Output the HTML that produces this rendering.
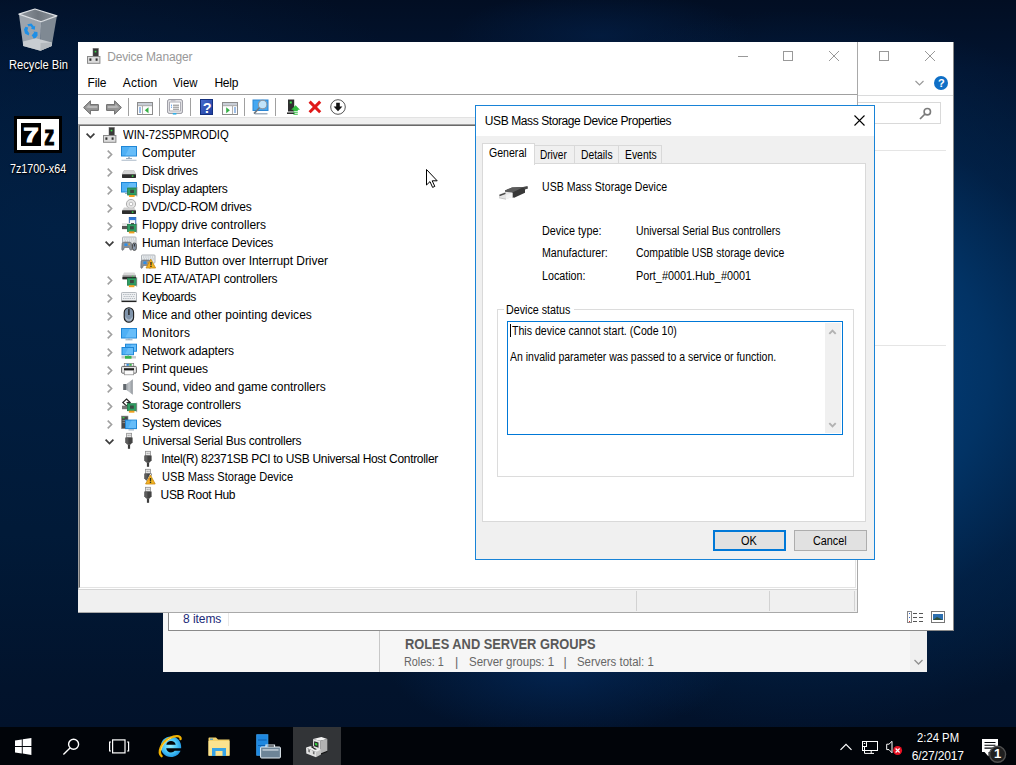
<!DOCTYPE html>
<html lang="en"><head><meta charset="utf-8"><title>Device Manager</title>
<style>
*{box-sizing:border-box;margin:0;padding:0}
html,body{width:1016px;height:765px;overflow:hidden}
body{position:relative;background:#02142e;font-family:"Liberation Sans",sans-serif;font-size:12px;color:#000}
.a{position:absolute}
.t{position:absolute;white-space:nowrap;line-height:16px;height:16px}
svg{position:absolute;overflow:visible}
#bg{left:0;top:0;width:1016px;height:765px;
 background:
  radial-gradient(ellipse 170px 70px at 560px 668px, rgba(3,38,84,.9) 0%, rgba(3,36,80,0) 100%),
  radial-gradient(ellipse 420px 360px at 800px 370px, #04478a 0%, #023365 45%, rgba(2,38,80,.6) 70%, rgba(2,30,66,0) 100%),
  radial-gradient(ellipse 420px 300px at 60px 230px, rgba(1,33,70,.85) 0%, rgba(1,26,57,0) 100%),
  radial-gradient(ellipse 150px 45px at 600px 36px, rgba(3,30,68,.75) 0%, rgba(3,30,68,0) 100%),
  linear-gradient(180deg,#020e23 0%,#021430 9%,#011a39 30%,#011a38 70%,#02132c 90%,#02112a 100%);}
#taskbar{left:0;top:727px;width:1016px;height:38px;background:#010409}
#sm{left:163px;top:100px;width:764px;height:572px;background:#f6f6f6}
#ex{left:168px;top:42px;width:786px;height:589px;background:#fff;border:1px solid #8a8a8a;border-top:none}
#dm{left:78px;top:42px;width:780px;height:571px;background:#fff;border-right:1px solid #a9a9a9;border-bottom:1px solid #a9a9a9}
#dlg{left:475px;top:105px;width:400px;height:455px;background:#f0f0f0;border:1px solid #1883d7}
.d{font-size:12px}
.dl{color:#fff;text-shadow:0 1px 2px rgba(0,0,0,.9),1px 1px 1px rgba(0,0,0,.8)}
.tb{color:#fff}

#dmtitle{left:107.2px;top:49px;letter-spacing:-0.166px}
#m0{left:87.6px;top:75px;letter-spacing:-0.18px}
#m1{left:122.8px;top:75px;letter-spacing:0.216px}
#m2{left:173px;top:75px;transform:scaleX(0.9462);transform-origin:0 0}
#m3{left:214.4px;top:75px;letter-spacing:-0.24px}
#r0{left:123px;top:127px;transform:scaleX(0.9381);transform-origin:0 0}
#r1{left:142px;top:145px;letter-spacing:0.129px}
#r2{left:142px;top:163px;letter-spacing:-0.27px}
#r3{left:142px;top:181px;letter-spacing:-0.24px}
#r4{left:142px;top:199px;letter-spacing:-0.225px}
#r5{left:142px;top:217px}
#r6{left:142px;top:235px;letter-spacing:-0.155px}
#r7{left:160.6px;top:253px;letter-spacing:-0.041px}
#r8{left:142px;top:271px;letter-spacing:-0.15px}
#r9{left:142px;top:289px;letter-spacing:-0.382px}
#r10{left:142px;top:307px;letter-spacing:0.036px}
#r11{left:142px;top:325px;letter-spacing:0.283px}
#r12{left:142px;top:343px;letter-spacing:-0.132px}
#r13{left:142px;top:361px;letter-spacing:-0.115px}
#r14{left:142px;top:379px;letter-spacing:-0.056px}
#r15{left:142px;top:397px;letter-spacing:-0.1px}
#r16{left:142px;top:415px;letter-spacing:-0.346px}
#r17{left:142.6px;top:433px;letter-spacing:-0.25px}
#r18{left:161.2px;top:451px;letter-spacing:-0.315px}
#r19{left:161.6px;top:469px;transform:scaleX(0.9226);transform-origin:0 0}
#r20{left:160.6px;top:487px;letter-spacing:-0.344px}
#dt{left:484.8px;top:113px;letter-spacing:-0.404px}
#tab0{left:489.4px;top:145px;transform:scaleX(0.881);transform-origin:0 0}
#tab1{left:539.6px;top:147px;transform:scaleX(0.838);transform-origin:0 0}
#tab2{left:580.8px;top:147px;transform:scaleX(0.8597);transform-origin:0 0}
#tab3{left:624.8px;top:147px;transform:scaleX(0.8649);transform-origin:0 0}
#d0{left:542px;top:179px;transform:scaleX(0.8803);transform-origin:0 0}
#l0{left:542px;top:223px;transform:scaleX(0.9002);transform-origin:0 0}
#l1{left:542px;top:245px;transform:scaleX(0.8868);transform-origin:0 0}
#l2{left:542px;top:268px;transform:scaleX(0.8918);transform-origin:0 0}
#v0{left:636.2px;top:223px;transform:scaleX(0.8659);transform-origin:0 0}
#v1{left:636.2px;top:245px;transform:scaleX(0.8718);transform-origin:0 0}
#v2{left:636.2px;top:268px;transform:scaleX(0.9024);transform-origin:0 0}
#gs{left:506.2px;top:302px;transform:scaleX(0.8917);transform-origin:0 0}
#s0{left:511.6px;top:323px;transform:scaleX(0.8828);transform-origin:0 0}
#s1{left:509.8px;top:349px;transform:scaleX(0.875);transform-origin:0 0}
#bok{left:741.2px;top:533px;transform:scaleX(0.9082);transform-origin:0 0}
#bca{left:812.8px;top:533px;transform:scaleX(0.9028);transform-origin:0 0}
#k0{left:8.8px;top:57px;transform:scaleX(0.9302);transform-origin:0 0}
#k1{left:9.6px;top:161px;transform:scaleX(0.8953);transform-origin:0 0}
#sm0{left:405px;top:636px;transform:scaleX(0.9175);transform-origin:0 0}
#sma{left:404px;top:654px;transform:scaleX(0.8667);transform-origin:0 0}
#smb{left:455px;top:654px}
#smc{left:468.6px;top:654px;transform:scaleX(0.9211);transform-origin:0 0}
#smd{left:563.6px;top:654px}
#sme{left:577.2px;top:654px;transform:scaleX(0.9133);transform-origin:0 0}
#ex0{left:183px;top:611px;letter-spacing:-0.06px}
#tk0{left:917px;top:730px;transform:scaleX(0.9411);transform-origin:0 0}
#tk1{left:911.8px;top:748px;letter-spacing:-0.158px}
</style></head><body>
<div class="a" id="bg"></div>
<svg style="left:18px;top:8px" width="40" height="44" viewBox="0 0 40 44"><defs><linearGradient id="rbi" x1="0" x2="1"><stop offset="0" stop-color="#9299a1"/><stop offset=".5" stop-color="#70777f"/><stop offset="1" stop-color="#8c939b"/></linearGradient></defs>
<path d="M0.900 6.100L23.100 13.800L22.400 42.700L5.200 37.900Z" fill="#9ca4ad"/>
<path d="M23.100 13.800L38.900 7.900L33.700 37.900L22.400 42.700Z" fill="#7f8993"/>
<path d="M5 33.500L18 30.300L33.900 34.600L33.700 37.900L22.400 42.700L5.200 37.900Z" fill="#c9cdd1"/>
<path d="M22.600 35L33.900 34.600L33.700 37.900L22.400 42.700Z" fill="#b4b9be"/>
<path d="M0.900 6.100L16.900 1L38.900 7.900L23.100 13.800Z" fill="url(#rbi)" stroke="#dde0e4" stroke-width="1.200" stroke-linejoin="round"/>
<g fill="#1e8fe6"><path d="M9.300 16.200L13.400 15.500L16 18.600L17.200 17.800L16.800 21.800L12.800 20.800L14 20L12.400 18L10.600 18.400Z"/><path d="M7.400 18.800L10.200 19.600L9.400 22.400L11.400 25.400L10.600 27.600L7 25.400L6 21.400Z"/><path d="M13.600 27.400L16.200 24.400L15.400 23.600L19.400 24L19.600 27.600L17.600 30L15.600 30.400L14.800 28.800Z"/></g></svg>
<div class="t dl" id="k0">Recycle Bin</div>
<div class="a" style="left:14px;top:116px;width:48px;height:37px;background:#000"></div>
<div class="a" style="left:17px;top:119px;width:42px;height:31px;background:#fff"></div>
<div class="a" style="left:21px;top:123px;width:20px;height:23px;background:#000"></div>
<svg style="left:21px;top:123px" width="36" height="23" viewBox="0 0 36 23" font-family="Liberation Sans, sans-serif" font-weight="bold"><text transform="translate(2.400,19) scale(1.320,1)" font-size="20.500" fill="#fff" stroke="#fff" stroke-width="1.100">7</text><text transform="translate(23.200,22.300) scale(.740,1)" font-size="27.500" fill="#000" stroke="#000" stroke-width="1.100">z</text></svg>
<div class="t dl" id="k1">7z1700-x64</div>
<div class="a" id="sm"></div>
<div class="a" style="left:379px;top:631px;width:1px;height:41px;background:#c8c8c8"></div>
<div class="a" style="left:910px;top:631px;width:17px;height:41px;background:#f0f0f0"></div>
<svg style="left:914px;top:659px" width="9" height="6" viewBox="0 0 9 6"><path d="M0.5 1L4.5 5L8.5 1" stroke="#909090" stroke-width="1.3" fill="none"/></svg>
<div class="t" id="sm0" style="font-size:14px;font-weight:bold;color:#595959">ROLES AND SERVER GROUPS</div>
<div class="t" id="sma" style="font-size:12.5px;color:#666">Roles: 1</div>
<div class="t" id="smb" style="font-size:12.5px;color:#666">|</div>
<div class="t" id="smc" style="font-size:12.5px;color:#666">Server groups: 1</div>
<div class="t" id="smd" style="font-size:12.5px;color:#666">|</div>
<div class="t" id="sme" style="font-size:12.5px;color:#666">Servers total: 1</div>
<div class="a" id="ex"></div>
<svg style="left:879px;top:51px" width="60" height="12" viewBox="0 0 60 12"><g stroke="#999" stroke-width="1" fill="none"><rect x="0.5" y="0.5" width="9" height="9"/><path d="M46 0L56 10M56 0L46 10"/></g></svg>
<svg style="left:915px;top:80px" width="10" height="7" viewBox="0 0 10 7"><path d="M0.5 1L4.5 5L8.5 1" stroke="#9a9a9a" stroke-width="1.2" fill="none"/></svg>
<div class="a" style="left:934px;top:76px;width:14px;height:14px;border-radius:7px;background:#0f6fc6"></div>
<div class="t" style="left:938px;top:75px;color:#fff;font-weight:bold;font-size:11px">?</div>
<div class="a" style="left:858px;top:95px;width:95px;height:1px;background:#dadbdc"></div>
<div class="a" style="left:850px;top:102px;width:91px;height:22px;border:1px solid #d9d9d9;background:#fff"></div>
<svg style="left:919px;top:107px" width="13" height="13" viewBox="0 0 13 13"><circle cx="8.3" cy="4.7" r="3.2" stroke="#7a7a7a" stroke-width="1.6" fill="none"/><path d="M6 7L1 12" stroke="#7a7a7a" stroke-width="1.7"/></svg>
<div class="a" style="left:870px;top:150px;width:76px;height:1px;background:#e5e5e5"></div>
<div class="a" style="left:870px;top:345px;width:76px;height:1px;background:#e5e5e5"></div>
<svg style="left:907px;top:611px" width="38" height="13" viewBox="0 0 38 13"><g fill="none" stroke="#666" stroke-width="1"><rect x="0.5" y="0.5" width="4" height="11" stroke="#888"/><path d="M6 2.5H10M12 2.5H16M6 6.5H10M12 6.5H16M6 10.5H10M12 10.5H16" stroke="#555"/><path d="M2 2.5H3M2 6.5H3" stroke="#36c"/><path d="M2 10.5H3" stroke="#c33"/><rect x="24.500" y="0.500" width="13" height="11" stroke="#777" fill="#fff"/></g><rect x="26" y="3" width="10" height="6" fill="#2c6fb0"/><path d="M26 9L30 6L36 9Z" fill="#2d4f3a"/></svg>
<div class="t" id="ex0" style="color:#1b2a78">8 items</div>
<div class="a" style="left:228px;top:613px;width:1px;height:13px;background:#e8e8e8"></div>
<div class="a" id="dm"></div>
<svg style="left:86px;top:48px" width="16" height="16" viewBox="0 0 16 16"><rect x="7" y="0.400" width="5.400" height="8" fill="#3a3a3a"/><rect x="7" y="0.400" width="5.400" height="8" fill="none" stroke="#6a6a6a" stroke-width=".5"/><rect x="8.700" y="2.800" width="1.600" height="1.600" fill="#3be04a"/><rect x="1.500" y="8.500" width="12.400" height="6.800" fill="#dcdcdc" stroke="#8a8a8a" stroke-width="1"/><rect x="3.400" y="10.400" width="2" height="2.400" fill="#333"/><rect x="9.600" y="10.400" width="2" height="2.400" fill="#333"/></svg>
<div class="t" id="dmtitle" style="color:#999">Device Manager</div>
<svg style="left:738px;top:51px" width="100" height="12" viewBox="0 0 100 12"><g stroke="#999" stroke-width="1" fill="none"><path d="M0 5.5H10"/><rect x="45.5" y="0.5" width="9" height="9"/><path d="M91 0L101 10M101 0L91 10"/></g></svg>
<div class="t m" id="m0">File</div>
<div class="t m" id="m1">Action</div>
<div class="t m" id="m2">View</div>
<div class="t m" id="m3">Help</div>
<div class="a" style="left:78px;top:94px;width:779px;height:1px;background:#a0a0a0"></div>
<svg style="left:83px;top:100px" width="16" height="15" viewBox="0 0 16 15"><path d="M0.600 7.500L7.400 0.800V4.600H15.400V10.400H7.400V14.200Z" fill="#969696" stroke="#6c6c6c" stroke-width="1" stroke-linejoin="round"/><path d="M3 7.500L6.600 4V6H14.300V8H6.600Z" fill="#b8b8b8"/></svg>
<svg style="left:106px;top:100px" width="16" height="15" viewBox="0 0 16 15"><g transform="translate(16,0) scale(-1,1)"><path d="M0.600 7.500L7.400 0.800V4.600H15.400V10.400H7.400V14.200Z" fill="#969696" stroke="#6c6c6c" stroke-width="1" stroke-linejoin="round"/><path d="M3 7.500L6.600 4V6H14.300V8H6.600Z" fill="#b8b8b8"/></g></svg>
<div class="a" style="left:128px;top:98px;width:1px;height:18px;background:#a0a0a0"></div>
<div class="a" style="left:159px;top:98px;width:1px;height:18px;background:#a0a0a0"></div>
<div class="a" style="left:190px;top:98px;width:1px;height:18px;background:#a0a0a0"></div>
<div class="a" style="left:244px;top:98px;width:1px;height:18px;background:#a0a0a0"></div>
<div class="a" style="left:275px;top:98px;width:1px;height:18px;background:#a0a0a0"></div>
<svg style="left:137px;top:102px" width="16" height="13" viewBox="0 0 16 13"><rect x="0.500" y="0.500" width="15" height="12" fill="#fdfdfd" stroke="#8c8c8c" stroke-width="1"/><rect x="1" y="1" width="14" height="2.200" fill="#c9ced6"/><path d="M1 3.700H15" stroke="#8c8c8c" stroke-width=".8"/><path d="M5.5 4V12.500" stroke="#9a9a9a" stroke-width=".8"/><path d="M2 6H4M2 8H4M2 10H4" stroke="#3f7fd0" stroke-width="1"/><path d="M11.500 5.200V11.200L7.800 8.200Z" fill="#35b045"/></svg>
<svg style="left:167px;top:99px" width="16" height="16" viewBox="0 0 16 16"><rect x="0.700" y="0.700" width="14.600" height="13.600" rx="1.200" fill="#f4f4f6" stroke="#8a8a94" stroke-width="1"/><rect x="2.600" y="3" width="10.800" height="9" fill="#fff" stroke="#9a9aa4" stroke-width=".8"/><path d="M6 6.200H12M6 8.200H12M6 10.200H12" stroke="#777" stroke-width=".9"/><path d="M4 6.200H5M4 8.200H5" stroke="#3a8ee6" stroke-width="1"/><rect x="5.800" y="14" width="3.600" height="1.600" fill="#2fb0e8"/><path d="M4 1.800H8.500" stroke="#b4b4bc" stroke-width="1"/></svg>
<svg style="left:200px;top:99px" width="13" height="16" viewBox="0 0 13 16"><defs><linearGradient id="hg" x1="0" x2="1" y1="0" y2="1"><stop offset="0" stop-color="#4a6fd0"/><stop offset="1" stop-color="#1c3a9c"/></linearGradient></defs><rect x="0" y="0" width="13" height="16" fill="url(#hg)"/><rect x="0.500" y="0.500" width="12" height="15" fill="none" stroke="#14307e" stroke-width="1"/><text x="7.200" y="13.700" text-anchor="middle" font-family="Liberation Sans, sans-serif" font-weight="bold" font-size="14.500" fill="#fff">?</text></svg>
<svg style="left:222px;top:102px" width="16" height="13" viewBox="0 0 16 13"><rect x="0.500" y="0.500" width="15" height="12" fill="#fdfdfd" stroke="#8c8c8c" stroke-width="1"/><rect x="1" y="1" width="14" height="2.200" fill="#c9ced6"/><path d="M1 3.700H15" stroke="#8c8c8c" stroke-width=".8"/><path d="M10.5 4V12.500" stroke="#9a9a9a" stroke-width=".8"/><path d="M12 6H14M12 8H14M12 10H14" stroke="#3f7fd0" stroke-width="1"/><path d="M4.200 5.200V11.200L7.900 8.200Z" fill="#35b045"/></svg>
<svg style="left:252px;top:99px" width="18" height="16" viewBox="0 0 18 16"><rect x="1" y="1" width="15" height="10.500" fill="#45a8f2" stroke="#2b86d4" stroke-width="1"/><path d="M3 14.800H15.500" stroke="#8a9cb0" stroke-width="1.200"/><circle cx="10.600" cy="5.600" r="4.300" fill="#d7eefc" fill-opacity=".85" stroke="#8a96a2" stroke-width="1.100"/><path d="M7.400 8.800L2 14.600" stroke="#70787f" stroke-width="1.600"/></svg>
<svg style="left:287px;top:99px" width="14" height="16" viewBox="0 0 14 16"><rect x="1" y="0.500" width="6.200" height="12" fill="#2f2f2f"/><rect x="2.800" y="2.500" width="2" height="2" fill="#39e04a"/><path d="M0 14.200H7.500" stroke="#222" stroke-width="1.500"/><path d="M8.600 6.200L13 10.800H10.800V12H6.400V10.800H4.200Z" fill="#30c040"/><path d="M6.400 13.200H10.800M6.400 15.200H10.800" stroke="#30c040" stroke-width="1.100"/></svg>
<svg style="left:308px;top:100px" width="14" height="14" viewBox="0 0 14 14"><path d="M1.600 1.600L12.200 12.200M12.200 1.600L1.600 12.200" stroke="#e01818" stroke-width="3" stroke-linecap="butt"/></svg>
<svg style="left:330px;top:99px" width="16" height="16" viewBox="0 0 16 16"><circle cx="8" cy="8" r="7.300" fill="#fff" stroke="#555" stroke-width="1"/><path d="M6.200 3.800H9.800V7.600H12.400L8 12.300L3.600 7.600H6.200Z" fill="#111"/></svg>
<div class="a" style="left:78px;top:117px;width:779px;height:7px;background:#f0f0f0;border-top:1px solid #e2e2e2"></div>
<div class="a" style="left:78px;top:124px;width:779px;height:465px;border:1px solid #a0a0a0;border-right-color:#fff;border-bottom-color:#fff"></div>
<div class="a" style="left:79px;top:125px;width:777px;height:463px;border:1px solid #696969;border-right-color:#e3e3e3;border-bottom-color:#e3e3e3"></div>
<svg style="left:86.0px;top:133px" width="9" height="6" viewBox="0 0 9 6"><path d="M0.600 0.600L4.500 4.500L8.400 0.600" stroke="#3c3c3c" stroke-width="1.700" fill="none"/></svg>
<svg style="left:102px;top:127px" width="16" height="16" viewBox="0 0 16 16"><rect x="7" y="0.400" width="5.400" height="8" fill="#3a3a3a"/><rect x="7" y="0.400" width="5.400" height="8" fill="none" stroke="#6a6a6a" stroke-width=".5"/><rect x="8.700" y="2.800" width="1.600" height="1.600" fill="#3be04a"/><rect x="1.500" y="8.500" width="12.400" height="6.800" fill="#dcdcdc" stroke="#8a8a8a" stroke-width="1"/><rect x="3.400" y="10.400" width="2" height="2.400" fill="#333"/><rect x="9.600" y="10.400" width="2" height="2.400" fill="#333"/></svg>
<div class="t r" id="r0">WIN-72S5PMRODIQ</div>
<svg style="left:107.0px;top:150px" width="6" height="9" viewBox="0 0 6 9"><path d="M0.700 0.600L4.600 4.500L0.700 8.400" stroke="#a0a0a0" stroke-width="1.600" fill="none"/></svg>
<svg style="left:121px;top:145px" width="16" height="16" viewBox="0 0 16 16"><rect x="0.5" y="1.5" width="15" height="9.5" fill="#4fb0f5" stroke="#1f86d6" stroke-width="1"/><path d="M8.75 2.0L15.0 2.0V10.5L4.25 10.5Z" fill="#7cc8fb" opacity=".55"/><path d="M8 11.500V13.500" stroke="#9ab" stroke-width="1.500"/><path d="M5 13.600H11" stroke="#8fa3b5" stroke-width="1"/><path d="M0.500 15.300H15.500" stroke="#b9c6d2" stroke-width="1.200"/></svg>
<div class="t r" id="r1">Computer</div>
<svg style="left:107.0px;top:168px" width="6" height="9" viewBox="0 0 6 9"><path d="M0.700 0.600L4.600 4.500L0.700 8.400" stroke="#a0a0a0" stroke-width="1.600" fill="none"/></svg>
<svg style="left:121px;top:163px" width="16" height="16" viewBox="0 0 16 16"><path d="M3 7.500H13L15 11.500H1Z" fill="#d4d4d4"/><path d="M3 7.500H13L15 11.500H1Z" fill="none" stroke="#b5b5b5" stroke-width=".5"/><rect x="1" y="11.300" width="14" height="3.600" rx=".6" fill="#2d2d2d"/><rect x="10.800" y="12.400" width="1.600" height="1.400" fill="#3be04a"/></svg>
<div class="t r" id="r2">Disk drives</div>
<svg style="left:107.0px;top:186px" width="6" height="9" viewBox="0 0 6 9"><path d="M0.700 0.600L4.600 4.500L0.700 8.400" stroke="#a0a0a0" stroke-width="1.600" fill="none"/></svg>
<svg style="left:121px;top:181px" width="16" height="16" viewBox="0 0 16 16"><rect x="0.5" y="1.5" width="15" height="9.5" fill="#4fb0f5" stroke="#1f86d6" stroke-width="1"/><path d="M8.75 2.0L15.0 2.0V10.5L4.25 10.5Z" fill="#7cc8fb" opacity=".55"/><path d="M4 12.400H8" stroke="#8fa3b5" stroke-width="1"/><g transform="translate(6.6,7)"><rect x="0" y="0" width="9" height="7" fill="#2f9e63"/><rect x="0" y="0" width="9" height="7" fill="none" stroke="#1f7a49" stroke-width=".8"/><rect x="2.600" y="1.800" width="3.800" height="3.200" fill="#3b4a42"/><rect x="1.500" y="7" width="5.500" height="2" fill="#f0a020"/><path d="M9.300 -1V8.500" stroke="#8d8d8d" stroke-width=".8"/></g></svg>
<div class="t r" id="r3">Display adapters</div>
<svg style="left:107.0px;top:204px" width="6" height="9" viewBox="0 0 6 9"><path d="M0.700 0.600L4.600 4.500L0.700 8.400" stroke="#a0a0a0" stroke-width="1.600" fill="none"/></svg>
<svg style="left:121px;top:199px" width="16" height="16" viewBox="0 0 16 16"><circle cx="10" cy="5" r="4.600" fill="#e6e6e6" stroke="#9c9c9c" stroke-width=".8"/><circle cx="10" cy="5" r="1.800" fill="#fff" stroke="#a8a8a8" stroke-width=".7"/><path d="M3 8.500H13L15 11.500H1Z" fill="#cfcfcf"/><rect x="1" y="11.300" width="14" height="3.600" rx=".6" fill="#2d2d2d"/><rect x="10.800" y="12.400" width="1.600" height="1.400" fill="#3be04a"/></svg>
<div class="t r" id="r4">DVD/CD-ROM drives</div>
<svg style="left:107.0px;top:222px" width="6" height="9" viewBox="0 0 6 9"><path d="M0.700 0.600L4.600 4.500L0.700 8.400" stroke="#a0a0a0" stroke-width="1.600" fill="none"/></svg>
<svg style="left:121px;top:217px" width="16" height="16" viewBox="0 0 16 16"><rect x="8.300" y="0.500" width="6.500" height="8" fill="#f4f6f8" stroke="#2c5ea8" stroke-width=".9"/><rect x="8.300" y="0.500" width="6.500" height="2.600" fill="#2f78d8"/><rect x="10" y="6" width="3" height="2.500" fill="#555"/><path d="M1 6.500H8.500V12.500H1Z" fill="#cfcfcf"/><rect x="1" y="9" width="7" height="3" fill="#555"/><rect x="1" y="6" width="8" height="3" fill="#e3e3e3"/><g transform="translate(6.4,7.4)"><rect x="0" y="0" width="9" height="7" fill="#2f9e63"/><rect x="0" y="0" width="9" height="7" fill="none" stroke="#1f7a49" stroke-width=".8"/><rect x="2.600" y="1.800" width="3.800" height="3.200" fill="#3b4a42"/><rect x="1.500" y="7" width="5.500" height="2" fill="#f0a020"/><path d="M9.300 -1V8.500" stroke="#8d8d8d" stroke-width=".8"/></g></svg>
<div class="t r" id="r5">Floppy drive controllers</div>
<svg style="left:105.0px;top:241px" width="9" height="6" viewBox="0 0 9 6"><path d="M0.600 0.600L4.500 4.500L8.400 0.600" stroke="#3c3c3c" stroke-width="1.700" fill="none"/></svg>
<svg style="left:121px;top:235px" width="16" height="16" viewBox="0 0 16 16"><rect x="1.500" y="2" width="13.500" height="8" rx=".8" fill="#eceff1" stroke="#9aa0a6" stroke-width=".8"/><path d="M3 4H14M3 8H14" stroke="#b4bac0" stroke-width="1" stroke-dasharray="1.400 .8"/><path d="M2.500 6H14" stroke="#b4bac0" stroke-width="1" stroke-dasharray="1.400 .8" stroke-dashoffset="1.100"/><g transform="translate(0,1.800)"><path d="M1 7.600C1 6 2 5.300 3.300 5.300H8.300C9.600 5.300 10.500 6 10.500 7.600L10.800 12.500C10.800 13.600 9.400 13.800 9 12.800L8.200 10.600H3.400L2.600 12.800C2.200 13.800 .7 13.600 .8 12.500Z" fill="#8d9399" stroke="#555b61" stroke-width=".6"/><rect x="3.400" y="6.600" width="3" height="2.600" fill="#2e8fe8"/><circle cx="8.200" cy="7.500" r=".8" fill="#e8a020"/></g><rect x="11.500" y="8" width="3.800" height="7.400" rx="1.800" fill="#8796a8" stroke="#333" stroke-width=".8"/><path d="M13.400 9V11.500" stroke="#222" stroke-width=".9"/></svg>
<div class="t r" id="r6">Human Interface Devices</div>
<svg style="left:140px;top:253px" width="16" height="16" viewBox="0 0 16 16"><rect x="1.500" y="2" width="13.500" height="8" rx=".8" fill="#eceff1" stroke="#9aa0a6" stroke-width=".8"/><path d="M3 4H14M3 8H14" stroke="#b4bac0" stroke-width="1" stroke-dasharray="1.400 .8"/><path d="M2.500 6H14" stroke="#b4bac0" stroke-width="1" stroke-dasharray="1.400 .8" stroke-dashoffset="1.100"/><g transform="translate(0,1.800)"><path d="M1 7.600C1 6 2 5.300 3.300 5.300H8.300C9.600 5.300 10.500 6 10.500 7.600L10.800 12.500C10.800 13.600 9.400 13.800 9 12.800L8.200 10.600H3.400L2.600 12.800C2.200 13.800 .7 13.600 .8 12.500Z" fill="#8d9399" stroke="#555b61" stroke-width=".6"/><rect x="3.400" y="6.600" width="3" height="2.600" fill="#2e8fe8"/><circle cx="8.200" cy="7.500" r=".8" fill="#e8a020"/></g><path d="M10.800 6.200L15.600 15H6Z" fill="#f4b223" stroke="#c88a12" stroke-width=".8" stroke-linejoin="round"/><text x="10.800" y="14.300" text-anchor="middle" font-family="Liberation Sans, sans-serif" font-weight="bold" font-size="8" fill="#111">!</text></svg>
<div class="t r" id="r7">HID Button over Interrupt Driver</div>
<svg style="left:107.0px;top:276px" width="6" height="9" viewBox="0 0 6 9"><path d="M0.700 0.600L4.600 4.500L0.700 8.400" stroke="#a0a0a0" stroke-width="1.600" fill="none"/></svg>
<svg style="left:121px;top:271px" width="16" height="16" viewBox="0 0 16 16"><path d="M3 1.500H13.500L15 4.500H1.500Z" fill="#d8d8d8"/><rect x="1.500" y="4.300" width="13.500" height="4.400" fill="#8a8a8a"/><rect x="1.500" y="6" width="13.500" height="2" fill="#2a2a2a"/><rect x="11" y="4.800" width="1.200" height="1" fill="#3be04a"/><g transform="translate(6.4,7.2)"><rect x="0" y="0" width="9" height="7" fill="#2f9e63"/><rect x="0" y="0" width="9" height="7" fill="none" stroke="#1f7a49" stroke-width=".8"/><rect x="2.600" y="1.800" width="3.800" height="3.200" fill="#3b4a42"/><rect x="1.500" y="7" width="5.500" height="2" fill="#f0a020"/><path d="M9.300 -1V8.500" stroke="#8d8d8d" stroke-width=".8"/></g></svg>
<div class="t r" id="r8">IDE ATA/ATAPI controllers</div>
<svg style="left:107.0px;top:294px" width="6" height="9" viewBox="0 0 6 9"><path d="M0.700 0.600L4.600 4.500L0.700 8.400" stroke="#a0a0a0" stroke-width="1.600" fill="none"/></svg>
<svg style="left:121px;top:289px" width="16" height="16" viewBox="0 0 16 16"><rect x="0.500" y="3.500" width="15" height="8.500" rx=".8" fill="#eef0f2" stroke="#a4aab0" stroke-width=".8"/><path d="M2 5.500H14M2 9.500H14" stroke="#b7bdc3" stroke-width="1" stroke-dasharray="1.400 .8"/><path d="M2 7.500H14" stroke="#b7bdc3" stroke-width="1" stroke-dasharray="1.400 .8" stroke-dashoffset="1.100"/><path d="M0.500 12.400H15.500" stroke="#222" stroke-width="1.400"/></svg>
<div class="t r" id="r9">Keyboards</div>
<svg style="left:107.0px;top:312px" width="6" height="9" viewBox="0 0 6 9"><path d="M0.700 0.600L4.600 4.500L0.700 8.400" stroke="#a0a0a0" stroke-width="1.600" fill="none"/></svg>
<svg style="left:121px;top:307px" width="16" height="16" viewBox="0 0 16 16"><rect x="3.200" y="0.800" width="9.400" height="14.400" rx="4.700" fill="#8094ab" stroke="#1c1c1c" stroke-width="1.100"/><path d="M4.500 9C6 13.500 10 13.500 11.500 9V11C11 14.800 5 14.800 4.500 11Z" fill="#bcc8d4" opacity=".8"/><path d="M7.900 2V8" stroke="#222" stroke-width="1.400"/></svg>
<div class="t r" id="r10">Mice and other pointing devices</div>
<svg style="left:107.0px;top:330px" width="6" height="9" viewBox="0 0 6 9"><path d="M0.700 0.600L4.600 4.500L0.700 8.400" stroke="#a0a0a0" stroke-width="1.600" fill="none"/></svg>
<svg style="left:121px;top:325px" width="16" height="16" viewBox="0 0 16 16"><rect x="0.5" y="3.5" width="15" height="9.5" fill="#4fb0f5" stroke="#1f86d6" stroke-width="1"/><path d="M8.75 4.0L15.0 4.0V12.5L4.25 12.5Z" fill="#7cc8fb" opacity=".55"/><path d="M8 13.500V14.500" stroke="#9ab" stroke-width="1.500"/><path d="M4.500 14.800H11.500" stroke="#8fa3b5" stroke-width="1"/></svg>
<div class="t r" id="r11">Monitors</div>
<svg style="left:107.0px;top:348px" width="6" height="9" viewBox="0 0 6 9"><path d="M0.700 0.600L4.600 4.500L0.700 8.400" stroke="#a0a0a0" stroke-width="1.600" fill="none"/></svg>
<svg style="left:121px;top:343px" width="16" height="16" viewBox="0 0 16 16"><g transform="translate(0,.7)"><rect x="4.5" y="0.5" width="11" height="7" fill="#4fb0f5" stroke="#1f86d6" stroke-width="1"/><path d="M10.55 1.0L15.0 1.0V7.0L7.25 7.0Z" fill="#7cc8fb" opacity=".55"/><rect x="1" y="3.8" width="11.5" height="7.2" fill="#4fb0f5" stroke="#1f86d6" stroke-width="1"/><path d="M7.325 4.3L12.0 4.3V10.5L3.875 10.5Z" fill="#7cc8fb" opacity=".55"/><path d="M0.500 13.600H15" stroke="#c9c9c9" stroke-width="2.400"/><rect x="4" y="12.200" width="6.500" height="2.800" fill="#36b34a"/><path d="M7.200 11V12.500" stroke="#8aa" stroke-width="1.200"/></g></svg>
<div class="t r" id="r12">Network adapters</div>
<svg style="left:107.0px;top:366px" width="6" height="9" viewBox="0 0 6 9"><path d="M0.700 0.600L4.600 4.500L0.700 8.400" stroke="#a0a0a0" stroke-width="1.600" fill="none"/></svg>
<svg style="left:121px;top:361px" width="16" height="16" viewBox="0 0 16 16"><g transform="translate(0,1.800)"><rect x="3.300" y="0.600" width="9.400" height="4" fill="#f2f2f2" stroke="#777" stroke-width=".7"/><rect x="5.500" y="1" width="2.400" height="2" fill="#2f86e0"/><rect x="8.300" y="1" width="2.400" height="2" fill="#3ab54a"/><rect x="0.600" y="3.600" width="14.800" height="6.800" rx="1" fill="#e6e6e6" stroke="#555" stroke-width=".9"/><rect x="3" y="5.400" width="10" height="2.200" fill="#1e1e1e"/><rect x="3.300" y="7.600" width="9.400" height="4.400" fill="#fbfbfb" stroke="#888" stroke-width=".7"/></g></svg>
<div class="t r" id="r13">Print queues</div>
<svg style="left:107.0px;top:384px" width="6" height="9" viewBox="0 0 6 9"><path d="M0.700 0.600L4.600 4.500L0.700 8.400" stroke="#a0a0a0" stroke-width="1.600" fill="none"/></svg>
<svg style="left:121px;top:379px" width="16" height="16" viewBox="0 0 16 16"><defs><linearGradient id="sg" x1="0" x2="1"><stop offset="0" stop-color="#70767c"/><stop offset=".6" stop-color="#c3c7cb"/><stop offset="1" stop-color="#8e9399"/></linearGradient></defs><path d="M2.400 5H5.500L11.800 0.300V15.700L5.500 11H2.400Z" fill="url(#sg)"/><path d="M2.400 5H5V11H2.400Z" fill="#62686e"/></svg>
<div class="t r" id="r14">Sound, video and game controllers</div>
<svg style="left:107.0px;top:402px" width="6" height="9" viewBox="0 0 6 9"><path d="M0.700 0.600L4.600 4.500L0.700 8.400" stroke="#a0a0a0" stroke-width="1.600" fill="none"/></svg>
<svg style="left:121px;top:397px" width="16" height="16" viewBox="0 0 16 16"><g transform="translate(0,1.200)"><path d="M5.500 0.800L9.200 4.300L5.500 7.800L1.800 4.300Z" fill="none" stroke="#2a2a2a" stroke-width="1.200"/><path d="M5.500 4.300H9" stroke="#2a2a2a" stroke-width="1.100"/><rect x="1" y="7.500" width="6" height="3.500" fill="#777"/><g transform="translate(6.4,5.5)"><rect x="0" y="0" width="9" height="7" fill="#2f9e63"/><rect x="0" y="0" width="9" height="7" fill="none" stroke="#1f7a49" stroke-width=".8"/><rect x="2.600" y="1.800" width="3.800" height="3.200" fill="#3b4a42"/><rect x="1.500" y="7" width="5.500" height="2" fill="#f0a020"/><path d="M9.300 -1V8.500" stroke="#8d8d8d" stroke-width=".8"/></g></g></svg>
<div class="t r" id="r15">Storage controllers</div>
<svg style="left:107.0px;top:420px" width="6" height="9" viewBox="0 0 6 9"><path d="M0.700 0.600L4.600 4.500L0.700 8.400" stroke="#a0a0a0" stroke-width="1.600" fill="none"/></svg>
<svg style="left:121px;top:415px" width="16" height="16" viewBox="0 0 16 16"><g transform="translate(0,.6)"><rect x="0.500" y="0.500" width="6.500" height="12.500" fill="#4a4a4a" stroke="#8a8a8a" stroke-width=".6"/><rect x="1.500" y="1.500" width="2" height="1.200" fill="#3be04a"/><path d="M1.500 5H6M1.500 7H6" stroke="#999" stroke-width=".8"/><rect x="4.5" y="4.5" width="11" height="8.5" fill="#4fb0f5" stroke="#1f86d6" stroke-width="1"/><path d="M10.55 5.0L15.0 5.0V12.5L7.25 12.5Z" fill="#7cc8fb" opacity=".55"/><path d="M7.500 14.300H13" stroke="#8fa3b5" stroke-width="1"/></g></svg>
<div class="t r" id="r16">System devices</div>
<svg style="left:105.0px;top:439px" width="9" height="6" viewBox="0 0 9 6"><path d="M0.600 0.600L4.500 4.500L8.400 0.600" stroke="#3c3c3c" stroke-width="1.700" fill="none"/></svg>
<svg style="left:121px;top:433px" width="16" height="16" viewBox="0 0 16 16"><g transform="translate(.4,0)"><rect x="5.200" y="0.300" width="5" height="4.400" fill="#e9e9e9" stroke="#8f8f8f" stroke-width=".8"/><rect x="6.300" y="1.800" width="1" height="1.300" fill="#9a9a9a"/><rect x="8.100" y="1.800" width="1" height="1.300" fill="#9a9a9a"/><path d="M3.900 4.400H11.200V9.300L9.300 11.600H5.800L3.900 9.300Z" fill="#444"/><path d="M4.600 5H7V11H6L4.600 9.200Z" fill="#5c5c5c"/><rect x="6.500" y="11.300" width="2.200" height="4.500" fill="#3d3d3d"/></g></svg>
<div class="t r" id="r17">Universal Serial Bus controllers</div>
<svg style="left:140px;top:451px" width="16" height="16" viewBox="0 0 16 16"><g transform="translate(.4,0)"><rect x="5.200" y="0.300" width="5" height="4.400" fill="#e9e9e9" stroke="#8f8f8f" stroke-width=".8"/><rect x="6.300" y="1.800" width="1" height="1.300" fill="#9a9a9a"/><rect x="8.100" y="1.800" width="1" height="1.300" fill="#9a9a9a"/><path d="M3.900 4.400H11.200V9.300L9.300 11.600H5.800L3.900 9.300Z" fill="#444"/><path d="M4.600 5H7V11H6L4.600 9.200Z" fill="#5c5c5c"/><rect x="6.500" y="11.300" width="2.200" height="4.500" fill="#3d3d3d"/></g></svg>
<div class="t r" id="r18">Intel(R) 82371SB PCI to USB Universal Host Controller</div>
<svg style="left:140px;top:469px" width="16" height="16" viewBox="0 0 16 16"><g transform="translate(.4,0)"><rect x="5.200" y="0.300" width="5" height="4.400" fill="#e9e9e9" stroke="#8f8f8f" stroke-width=".8"/><rect x="6.300" y="1.800" width="1" height="1.300" fill="#9a9a9a"/><rect x="8.100" y="1.800" width="1" height="1.300" fill="#9a9a9a"/><path d="M3.900 4.400H11.200V9.300L9.300 11.600H5.800L3.900 9.300Z" fill="#444"/><path d="M4.600 5H7V11H6L4.600 9.200Z" fill="#5c5c5c"/><rect x="6.500" y="11.300" width="2.200" height="4.500" fill="#3d3d3d"/></g><path d="M10.400 4.600L16 16H4.600Z" fill="#fff"/><path d="M10.400 6L15.200 15H5.600Z" fill="#f4b223" stroke="#c88a12" stroke-width=".8" stroke-linejoin="round"/><text x="10.400" y="14.300" text-anchor="middle" font-family="Liberation Sans, sans-serif" font-weight="bold" font-size="8" fill="#111">!</text></svg>
<div class="t r" id="r19">USB Mass Storage Device</div>
<svg style="left:140px;top:487px" width="16" height="16" viewBox="0 0 16 16"><g transform="translate(.4,0)"><rect x="5.200" y="0.300" width="5" height="4.400" fill="#e9e9e9" stroke="#8f8f8f" stroke-width=".8"/><rect x="6.300" y="1.800" width="1" height="1.300" fill="#9a9a9a"/><rect x="8.100" y="1.800" width="1" height="1.300" fill="#9a9a9a"/><path d="M3.900 4.400H11.200V9.300L9.300 11.600H5.800L3.900 9.300Z" fill="#444"/><path d="M4.600 5H7V11H6L4.600 9.200Z" fill="#5c5c5c"/><rect x="6.500" y="11.300" width="2.200" height="4.500" fill="#3d3d3d"/></g></svg>
<div class="t r" id="r20">USB Root Hub</div>
<div class="a" style="left:78px;top:589px;width:779px;height:23px;background:#f0f0f0;border-top:1px solid #d4d4d4"></div>
<div class="a" style="left:636px;top:591px;width:1px;height:20px;background:#d2d2d2"></div>
<div class="a" style="left:769px;top:591px;width:1px;height:20px;background:#d2d2d2"></div>
<div class="a" style="left:854px;top:591px;width:1px;height:20px;background:#d2d2d2"></div>
<div class="a" id="dlg"></div>
<div class="a" style="left:476px;top:106px;width:398px;height:30px;background:#fff"></div>
<div class="t" id="dt">USB Mass Storage Device Properties</div>
<svg style="left:853.5px;top:114.5px" width="11" height="11" viewBox="0 0 11 11"><path d="M0.5 0.5L10.5 10.5M10.5 0.5L0.5 10.5" stroke="#000" stroke-width="1.1" fill="none"/></svg>
<div class="a" style="left:482px;top:163px;width:384px;height:359px;background:#fff;border:1px solid #d9d9d9"></div>
<div class="a" style="left:534px;top:145px;width:41px;height:19px;background:#f0f0f0;border:1px solid #d9d9d9"></div>
<div class="a" style="left:574px;top:145px;width:45px;height:19px;background:#f0f0f0;border:1px solid #d9d9d9"></div>
<div class="a" style="left:618px;top:145px;width:44px;height:19px;background:#f0f0f0;border:1px solid #d9d9d9"></div>
<div class="a" style="left:482px;top:143px;width:53px;height:22px;background:#fff;border:1px solid #d9d9d9;border-bottom:none"></div>
<div class="t d" id="tab0">General</div>
<div class="t d" id="tab1">Driver</div>
<div class="t d" id="tab2">Details</div>
<div class="t d" id="tab3">Events</div>
<svg style="left:498px;top:184px" width="31" height="16" viewBox="0 0 31 16"><path d="M7 6.600L14 3.400L25.500 2.900L27 4.500V8.800L16.200 13.800L14.200 13.200V8.600L7 8Z" fill="#383838"/><path d="M7 6.600L14 3.400L25.500 2.900L18 6.800L14.400 8.600L7.200 8Z" fill="#5c5c5c"/><path d="M1 10.400L7.400 7.800L14.400 8.800V13L8 15.200L1 13.800Z" fill="#e6e6e6"/><path d="M8 15.200L14.400 13V8.800L8.200 11Z" fill="#f4f4f4"/><path d="M1.300 10.700L7.400 8.600L7.600 10L1.600 12.200Z" fill="#4a4a4a"/><path d="M1 13.800L8 15.200" stroke="#b5b5b5" stroke-width=".7"/><path d="M25 3L29.500 2L30 4.500L27 5.400Z" fill="#474747"/></svg>
<div class="t d" id="d0">USB Mass Storage Device</div>
<div class="t d" id="l0">Device type:</div>
<div class="t d" id="v0">Universal Serial Bus controllers</div>
<div class="t d" id="l1">Manufacturer:</div>
<div class="t d" id="v1">Compatible USB storage device</div>
<div class="t d" id="l2">Location:</div>
<div class="t d" id="v2">Port_#0001.Hub_#0001</div>
<div class="a" style="left:497px;top:309px;width:357px;height:168px;border:1px solid #dcdcdc"></div>
<div class="a" style="left:504px;top:303px;width:70px;height:12px;background:#fff"></div>
<div class="t d" id="gs">Device status</div>
<div class="a" style="left:507px;top:321px;width:336px;height:114px;border:1px solid #0078d7;background:#fff"></div>
<div class="a" style="left:825px;top:323px;width:16px;height:110px;background:#f0f0f0"></div>
<svg style="left:829px;top:329px" width="7" height="6" viewBox="0 0 7 6"><path d="M0.300 4.800L3.500 1.500L6.700 4.800" stroke="#b2b2b2" stroke-width="1.900" fill="none"/></svg>
<svg style="left:829px;top:422px" width="7" height="6" viewBox="0 0 7 6"><path d="M0.300 1.200L3.500 4.500L6.700 1.200" stroke="#b2b2b2" stroke-width="1.900" fill="none"/></svg>
<div class="a" style="left:510px;top:324px;width:1px;height:13px;background:#000"></div>
<div class="t d" id="s0">This device cannot start. (Code 10)</div>
<div class="t d" id="s1">An invalid parameter was passed to a service or function.</div>
<div class="a" style="left:713px;top:530px;width:73px;height:21px;background:#e1e1e1;border:2px solid #0078d7"></div>
<div class="a" style="left:794px;top:530px;width:73px;height:21px;background:#e1e1e1;border:1px solid #adadad"></div>
<div class="t d" id="bok">OK</div>
<div class="t d" id="bca">Cancel</div>
<svg style="left:426px;top:169px" width="12" height="19" viewBox="0 0 12 19"><path d="M0.5 0.5V16L4 12.6L6.6 18.4L8.8 17.4L6.2 11.8H11.2Z" fill="#fff" stroke="#000" stroke-width="1"/></svg>
<div class="a" id="taskbar"></div>
<div class="a" style="left:293px;top:727px;width:48px;height:38px;background:#323437"></div>
<svg style="left:15px;top:738px" width="17" height="17" viewBox="0 0 17 17"><path d="M0 2.4L6.8 1.4V8H0ZM7.7 1.3L16.4 0V8H7.7ZM0 8.9H6.8V15.4L0 14.4ZM7.7 8.9H16.4V16.9L7.7 15.6Z" fill="#fff"/></svg>
<svg style="left:62px;top:737px" width="18" height="19" viewBox="0 0 18 19"><circle cx="11.600" cy="7.300" r="5" stroke="#fff" stroke-width="1.4" fill="none"/><path d="M8 11.000L1.400 17.600" stroke="#fff" stroke-width="1.4"/></svg>
<svg style="left:109px;top:739px" width="21" height="15" viewBox="0 0 21 15"><g stroke="#fff" stroke-width="1.2" fill="none"><rect x="3.600" y="0.900" width="12.400" height="13"/><path d="M2 3H0.600V12H2M18.100 3H19.600V12H18.100"/></g></svg>
<svg style="left:158px;top:733px" width="25" height="26" viewBox="0 0 25 26"><defs><radialGradient id="ieg" cx=".45" cy=".45" r=".6"><stop offset="0" stop-color="#9af0ff"/><stop offset=".55" stop-color="#4cc8f8"/><stop offset="1" stop-color="#1a92e2"/></radialGradient></defs><g transform="translate(13,13.800) scale(1.200) translate(-12.500,-14)"><path d="M12.500 5.500C7.500 5.500 4 9 4 14C4 19 7.500 22.500 12.500 22.500C16.200 22.500 19.200 20.500 20.500 17.300H15.500C14.800 18.200 13.800 18.700 12.500 18.700C10.300 18.700 8.800 17.300 8.500 15.200H21C21.300 9.500 17.800 5.500 12.500 5.500ZM8.600 12.200C9 10.300 10.500 9.200 12.500 9.200C14.500 9.200 16 10.300 16.400 12.200Z" fill="url(#ieg)"/></g><path d="M3.600 23.200C-0.500 19.500 3 9.500 11.500 5.200C17 2.400 22.800 2.200 22.600 6" stroke="#f2b200" stroke-width="2.400" fill="none" stroke-linecap="round"/><path d="M3 17C4 12 8 7.500 13 5" stroke="#ffe27a" stroke-width="1" fill="none" stroke-linecap="round"/></svg>
<svg style="left:208px;top:737px" width="22" height="20" viewBox="0 0 22 20"><path d="M0.500 1.500C0.500 .9 .9 .5 1.500 .5H8L10 2.500H21.500V18.500H0.500Z" fill="#f3d16b"/><path d="M0.500 4H21.500V18.800H0.500Z" fill="#fbe38f"/><path d="M4 11H18V19H14.500V14H7.500V19H4Z" fill="#36a3e6"/><rect x="2" y="1.600" width="3" height="1.200" fill="#3a9ad9"/></svg>
<svg style="left:256px;top:734px" width="25" height="25" viewBox="0 0 25 25"><rect x="0.700" y="0.700" width="11.200" height="20.600" fill="#1e88e0"/><rect x="0.700" y="0.700" width="11.200" height="20.600" fill="none" stroke="#3aa0f0" stroke-width=".8"/><path d="M2 6H10.600M2 11.500H10.600" stroke="#0d5fae" stroke-width="1"/><rect x="4.600" y="13" width="19.800" height="11" rx="1" fill="#6d8497" stroke="#e6edf3" stroke-width="1"/><path d="M10 13V11H18.500V13" stroke="#e6edf3" stroke-width="1.200" fill="none"/><rect x="6.500" y="15.300" width="16" height="1.300" fill="#cfd9e2"/></svg>
<svg style="left:305px;top:736px" width="24" height="22" viewBox="0 0 24 22"><path d="M15.200 17.500L22.300 14.800V16L15.200 18.800Z" fill="#141414"/><path d="M8.100 3L16.400 0.900L22.300 3L15.200 4.800Z" fill="#f4f4f4"/><path d="M8.100 3L15.200 4.800V17.400L8.100 14Z" fill="#e4e4e4"/><path d="M15.200 4.800L22.300 3V14.800L15.200 17.400Z" fill="#b2b2b2"/><path d="M9.100 5.300L13.500 6.600V11.700L9.100 10.300Z" fill="#2a2a2a"/><path d="M10.100 6.700L12.300 7.400V9.700L10.100 9Z" fill="#2fd83c"/><path d="M1 11.500L6 9.900L8.100 10.800V12.500L11.500 13L16.200 13.500L11 16Z" fill="#efefef"/><path d="M5.500 10.800L8.500 10V11.600L12 13.200L10 13.800Z" fill="#222"/><path d="M1 11.500L11 16V21.200L1.300 17.500Z" fill="#e2e2e2"/><path d="M11 16L16.200 13.500L16 18.500L11 21.200Z" fill="#c4c4c4"/><path d="M3.300 13.100L4.900 13.700V16.500L3.300 15.900Z" fill="#707070"/><path d="M7.900 15.100L9.500 15.700V18.500L7.900 17.900Z" fill="#707070"/></svg>
<svg style="left:840px;top:742.500px" width="12" height="8" viewBox="0 0 12 8"><path d="M0.500 6.900L6 1.400L11.500 6.900" stroke="#fff" stroke-width="1.200" fill="none"/></svg>
<svg style="left:862px;top:739px" width="17" height="16" viewBox="0 0 17 16"><g stroke="#fff" stroke-width="1" fill="none"><rect x="0.500" y="2.500" width="15" height="9"/><rect x="0.500" y="2.500" width="4" height="5"/><path d="M1.800 4.500H3.200M2.500 7.500V14.400H12M9.200 11.500V14.400"/></g></svg>
<svg style="left:886px;top:738px" width="21" height="18" viewBox="0 0 21 18"><path d="M0.700 6.200H3L6 3.300V14.800L3 11.600H0.700Z" stroke="#fff" stroke-width="1" fill="none"/><circle cx="11.600" cy="12.500" r="4.500" fill="#e81123"/><path d="M9.600 10.500L13.600 14.500M13.600 10.500L9.600 14.500" stroke="#fff" stroke-width="1.200"/></svg>
<div class="t tb" id="tk0">2:24 PM</div>
<div class="t tb" id="tk1">6/27/2017</div>
<svg style="left:981px;top:738px" width="27" height="26" viewBox="0 0 27 26"><path d="M1 1H17V14H7.500V18.500L3.500 14H1Z" fill="#fff"/><path d="M3.500 4.500H14.500M3.500 7.300H14.500M3.500 10.100H14.500" stroke="#010409" stroke-width="1.100"/><circle cx="16.600" cy="16.300" r="8" fill="#1f1f1f" stroke="#4f4f4f" stroke-width="1.400"/></svg>
<div class="t" style="left:994px;top:746px;color:#fff;font-size:13px;font-weight:bold">1</div>

</body></html>
